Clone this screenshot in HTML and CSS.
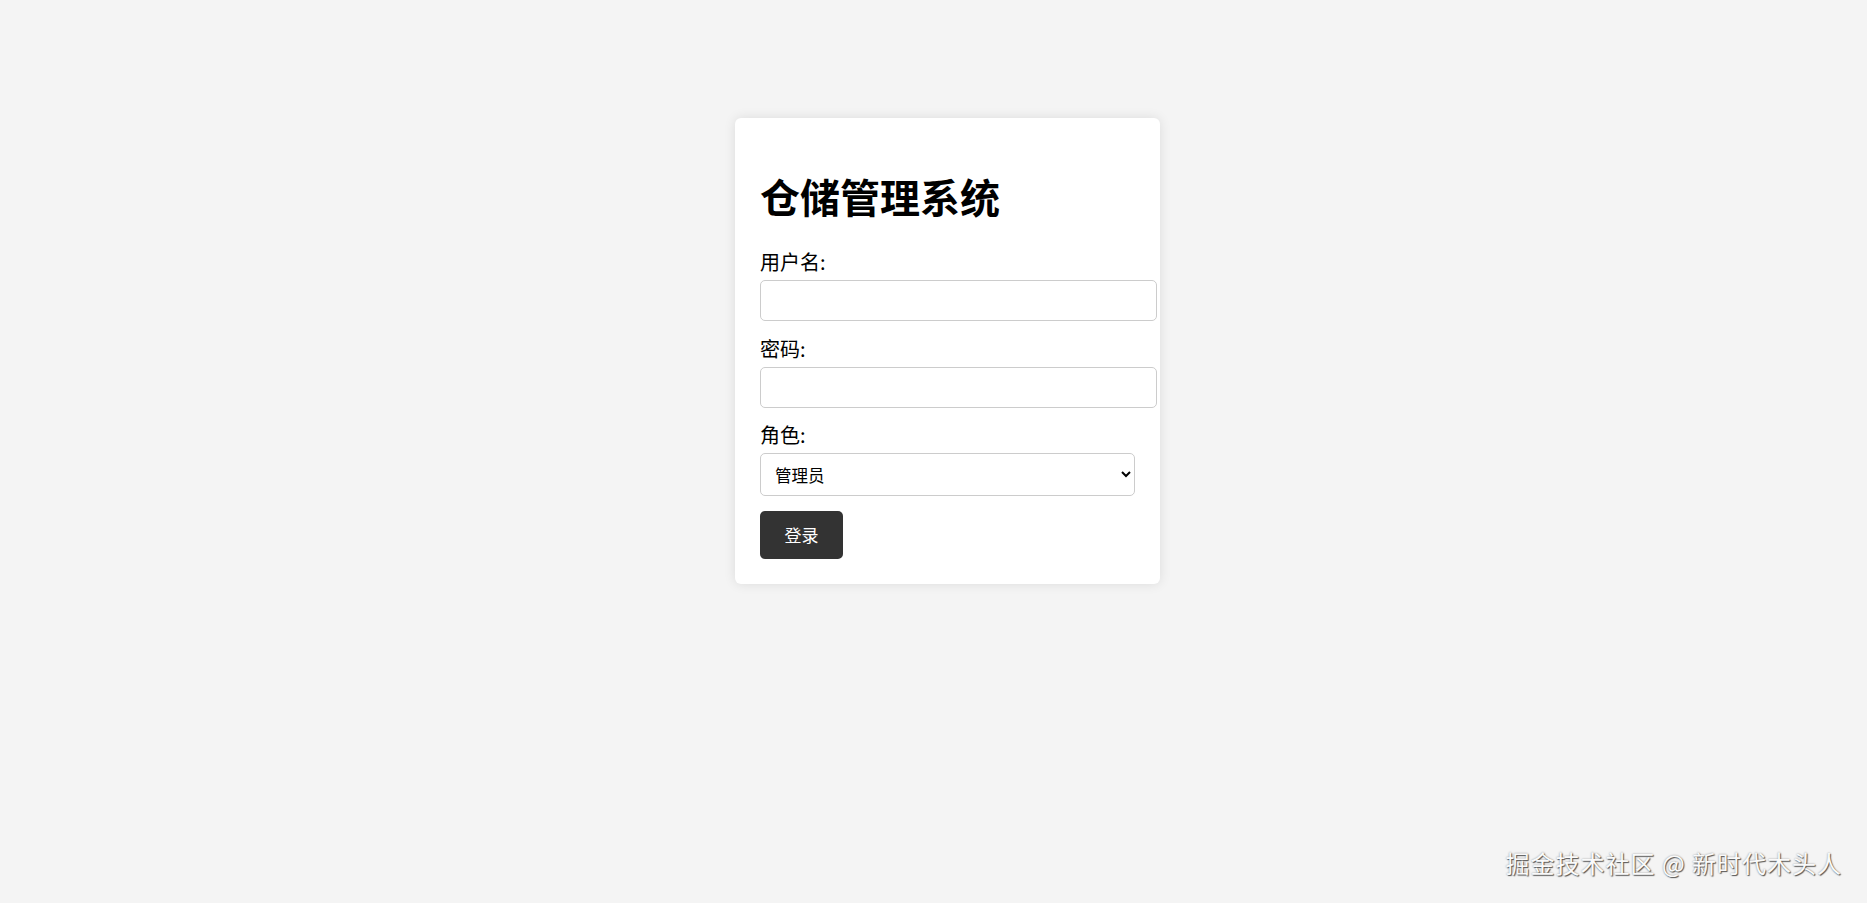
FILE: index.html
```html
<!DOCTYPE html>
<html lang="zh-CN">
<head>
<meta charset="utf-8">
<title>仓储管理系统</title>
<link rel="stylesheet" href="styles.css">
</head>
<body>
<div class="page">
  <div class="card">
    <h1 class="title">仓储管理系统</h1>
    <div class="group">
      <label class="label" for="u">用户名:</label>
      <input class="input" id="u" type="text">
    </div>
    <div class="group">
      <label class="label" for="p">密码:</label>
      <input class="input" id="p" type="password">
    </div>
    <div class="group">
      <label class="label" for="r">角色:</label>
      <select class="select" id="r">
        <option>管理员</option>
        <option>普通用户</option>
      </select>
    </div>
    <button class="btn" type="button">登录</button>
  </div>
</div>
<div class="watermark">掘金技术社区 @ 新时代木头人</div>
</body>
</html>
```

FILE: styles.css
```css
html, body {
  margin: 0;
  padding: 0;
  height: 100%;
}
body {
  background: #f4f4f4;
  font-family: "Liberation Sans", "Noto Sans CJK SC", sans-serif;
  color: #000;
  overflow: hidden;
}
.page {
  padding-top: 118px;
  padding-left: 735px;
}
.card {
  box-sizing: border-box;
  width: 425px;
  background: #fff;
  border-radius: 6px;
  padding: 25px;
  box-shadow: 0 0 12px rgba(0, 0, 0, 0.1);
}
.title {
  margin: 25px 0 25px;
  font-size: 40px;
  line-height: 56px;
  font-weight: 700;
  font-family: "Noto Sans CJK SC", sans-serif;
}
.group {
  margin-bottom: 14.5px;
}
.label {
  display: block;
  font-size: 20px;
  line-height: 25px;
  margin-bottom: 6px;
  font-family: "Noto Sans CJK SC", sans-serif;
}
.input {
  display: block;
  box-sizing: content-box;
  width: 100%;
  height: 19px;
  padding: 10px;
  margin: 0;
  border: 1px solid #ccc;
  border-radius: 5px;
  font-size: 16px;
  background: #fff;
  outline: none;
}
.select {
  display: block;
  box-sizing: border-box;
  width: 100%;
  height: 43px;
  padding: 0 6px 0 10px;
  margin: 0;
  border: 1px solid #ccc;
  border-radius: 5px;
  font-size: 16.5px;
  font-family: "Noto Sans CJK SC", sans-serif;
  background: #fff;
  color: #000;
}
.btn {
  display: block;
  margin-top: 11px;
  width: 83px;
  height: 48px;
  padding: 0;
  border: none;
  border-radius: 5px;
  background: #333;
  color: #fff;
  font-size: 17px;
  font-family: "Noto Sans CJK SC", sans-serif;
  cursor: pointer;
}
.watermark {
  position: absolute;
  right: 25px;
  bottom: 24px;
  font-size: 24px;
  line-height: 32px;
  color: #fafafa;
  text-shadow: 1px 1px 1px #555, 0 0 2px rgba(0,0,0,0.4);
  font-family: "Noto Sans CJK SC", sans-serif;
  letter-spacing: 1px;
}
```
